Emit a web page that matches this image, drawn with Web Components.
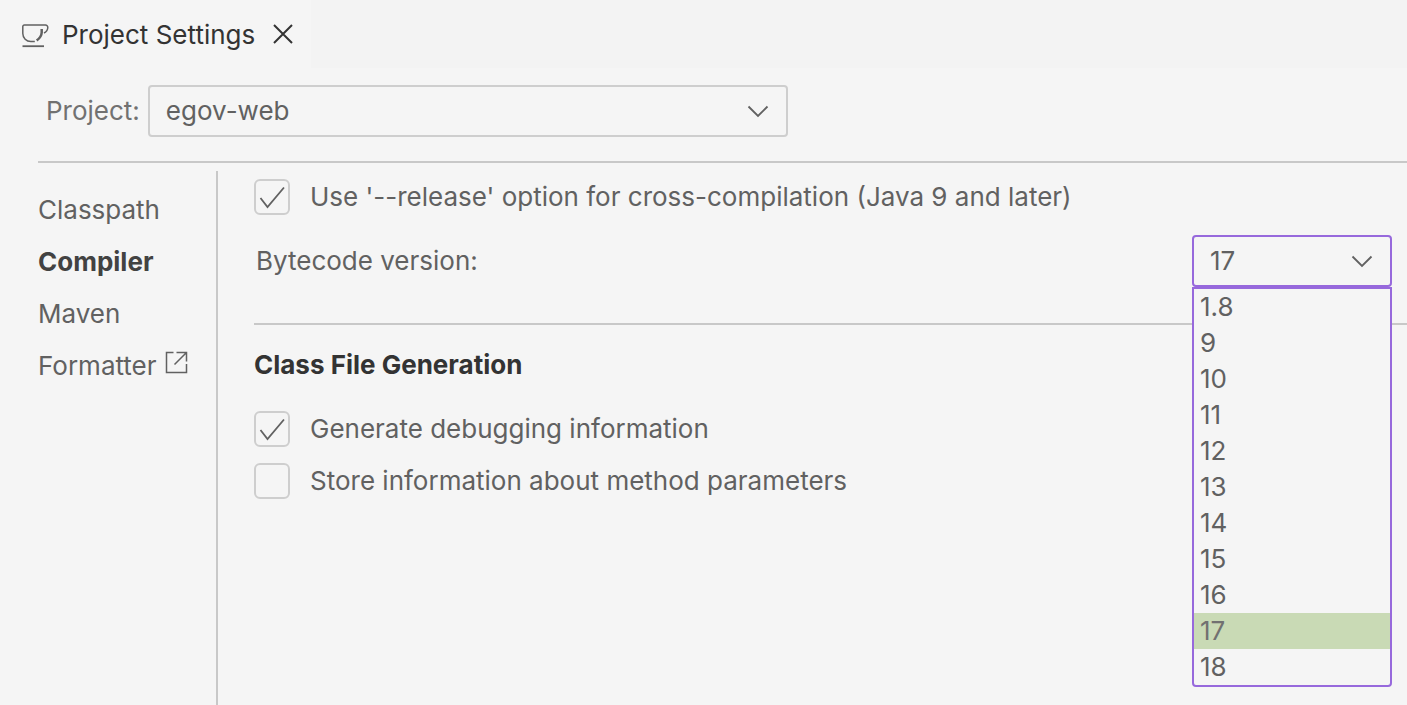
<!DOCTYPE html>
<html lang="en">
<head>
<meta charset="utf-8">
<title>Project Settings</title>
<style>
  html, body { height: 100%; }
  body {
    margin: 0;
    background: #f5f5f5;
    color: #616161;
    font: 26px/32px Inter, "Liberation Sans", sans-serif;
    --line: #c8c8c8;
    --border: #cecece;
    --focus: #9769dc;
    --selection: #c9dab5;
    --strong: #333333;
    overflow: hidden;
  }
</style>
</head>
<body>
<project-settings></project-settings>

<script>
class EditorTab extends HTMLElement {
  constructor() {
    super();
    this.attachShadow({ mode: "open" }).innerHTML = `
      <style>
        :host {
          display: flex;
          align-items: center;
          box-sizing: border-box;
          height: 68px;
          padding: 2px 16px 0 20px;
          background: #f5f5f5;
          color: var(--strong);
        }
        .cup { width: 30px; height: 28px; margin-right: 12px; }
        button {
          display: flex;
          margin: 0 0 0 16px;
          padding: 0;
          border: 0;
          background: none;
          color: inherit;
        }
      </style>
      <svg class="cup" viewBox="0 0 30 28" fill="none" stroke="#616161" stroke-width="1.5">
        <path d="M22 4H4.300a1.500 1.500 0 0 0-1.500 1.500v7a8 8 0 0 0 8 8h4"/>
        <path d="M22 4h3.500a2.300 2.300 0 0 1 2.300 2.300q0 4-3.800 5.700"/>
        <path d="M21.700 8v3.500q-.2 4.500-5 8" stroke-width="2.500"/>
        <path d="M2.500 25.200h21.500" stroke-width="1.800"/>
      </svg>
      <slot></slot>
      <button aria-label="Close">
        <svg width="24" height="24" viewBox="0 0 24 24" fill="none" stroke="currentColor" stroke-width="2">
          <path d="M3 2l18 18M21 2L3 20"/>
        </svg>
      </button>
    `;
  }
}

class SettingsNavItem extends HTMLElement {
  connectedCallback() {
    const active = this.hasAttribute("active");
    const external = this.hasAttribute("external");
    this.attachShadow({ mode: "open" }).innerHTML = `
      <style>
        :host { display: block; }
        a {
          display: flex;
          align-items: center;
          height: 52px;
          color: inherit;
          text-decoration: none;
        }
        a.active { color: #424242; font-weight: 700; }
        svg { margin: 0 0 6px 8px; }
      </style>
      <a href="#" class="${active ? "active" : ""}">
        <slot></slot>
        ${external ? `
        <svg width="24" height="24" viewBox="0 0 24 24" fill="none" stroke="#616161" stroke-width="1.5">
          <path d="M8.500 1.500H1.500v20h20V13M11.500 1.500h10v9M21 2L9.500 13.500"/>
        </svg>` : ""}
      </a>
    `;
  }
}

class CheckOption extends HTMLElement {
  connectedCallback() {
    this.attachShadow({ mode: "open" }).innerHTML = `
      <style>
        :host { display: block; }
        label { display: flex; align-items: center; gap: 20px; }
        .box { display: grid; flex: none; width: 36px; height: 36px; }
        .box > * { grid-area: 1 / 1; }
        input {
          appearance: none;
          box-sizing: border-box;
          width: 36px;
          height: 36px;
          margin: 0;
          border: 2px solid var(--border);
          border-radius: 6px;
        }
        svg { visibility: hidden; pointer-events: none; }
        input:checked + svg { visibility: visible; }
      </style>
      <label>
        <span class="box">
          <input type="checkbox" ${this.hasAttribute("checked") ? "checked" : ""}>
          <svg width="36" height="36" viewBox="0 0 36 36" fill="none" stroke="#616161" stroke-width="1.8">
            <path d="M6.500 19L13.500 28L30 8.500"/>
          </svg>
        </span>
        <span><slot></slot></span>
      </label>
    `;
  }
}

class SelectField extends HTMLElement {
  connectedCallback() {
    const options = this.getAttribute("options").split(",");
    const value = this.getAttribute("value");
    const open = this.hasAttribute("open");
    this.attachShadow({ mode: "open" }).innerHTML = `
      <style>
        :host { display: flex; align-items: center; }
        .field {
          display: grid;
          align-items: center;
          position: relative;
          width: var(--field-width, 200px);
        }
        .field > select, .field > svg { grid-area: 1 / 1; }
        select {
          appearance: none;
          box-sizing: border-box;
          width: 100%;
          height: 52px;
          margin: 0;
          padding: 0 16px;
          border: 2px solid var(--border);
          border-radius: 4px;
          outline: none;
          background: none;
          color: #616161;
          font: inherit;
        }
        svg { justify-self: end; margin-right: 18px; pointer-events: none; }
        :host([open]) select { border-color: var(--focus); }
        ul {
          box-sizing: border-box;
          position: absolute;
          top: 100%;
          left: 0;
          z-index: 1;
          width: 100%;
          margin: 0;
          padding: 0;
          border: 2px solid var(--focus);
          border-radius: 0 0 4px 4px;
          background: #f5f5f5;
          list-style: none;
        }
        li { padding: 0 6px; line-height: 36px; }
        li[aria-selected="true"] { background: var(--selection); color: #717171; }
      </style>
      <label for="select"><slot></slot></label>
      <div class="field">
        <select id="select">
          ${options.map((o) => `<option ${o === value ? "selected" : ""}>${o}</option>`).join("")}
        </select>
        <svg width="24" height="24" viewBox="0 0 24 24" fill="none" stroke="#616161" stroke-width="1.8">
          <path d="M2.500 7.500L12 17L21.500 7.500"/>
        </svg>
        ${open ? `
        <ul role="listbox">
          ${options.map((o) => `<li role="option" aria-selected="${o === value}">${o}</li>`).join("")}
        </ul>` : ""}
      </div>
    `;
  }
}

class ProjectSettings extends HTMLElement {
  constructor() {
    super();
    this.attachShadow({ mode: "open" }).innerHTML = `
      <style>
        :host { display: flex; flex-direction: column; height: 100%; }
        header { display: flex; background: #f3f3f3; }
        .project {
          --field-width: 640px;
          gap: 8px;
          padding: 17px 46px 24px;
          color: #717171;
        }
        hr {
          width: auto;
          margin: 0;
          border: 0;
          border-top: 2px solid var(--line);
        }
        .top { margin-left: 38px; }
        main { display: flex; flex: 1; margin-top: 8px; }
        nav {
          box-sizing: border-box;
          flex: none;
          width: 218px;
          padding: 13px 0 0 38px;
          border-right: 2px solid var(--line);
        }
        section { flex: 1; padding: 8px 0 0 36px; }
        .bytecode {
          justify-content: space-between;
          margin: 20px 15px 36px 2px;
        }
        h2 {
          margin: 24px 0 30px;
          color: var(--strong);
          font-size: inherit;
          font-weight: 700;
        }
        check-option + check-option { margin-top: 16px; }
      </style>
      <header><editor-tab>Project Settings</editor-tab></header>
      <select-field class="project" options="egov-web" value="egov-web">Project:</select-field>
      <hr class="top">
      <main>
        <nav>
          <settings-nav-item>Classpath</settings-nav-item>
          <settings-nav-item active>Compiler</settings-nav-item>
          <settings-nav-item>Maven</settings-nav-item>
          <settings-nav-item external>Formatter</settings-nav-item>
        </nav>
        <section>
          <check-option checked>Use '--release' option for cross-compilation (Java 9 and later)</check-option>
          <select-field class="bytecode" open options="1.8,9,10,11,12,13,14,15,16,17,18" value="17">Bytecode version:</select-field>
          <hr>
          <h2>Class File Generation</h2>
          <check-option checked>Generate debugging information</check-option>
          <check-option>Store information about method parameters</check-option>
        </section>
      </main>
    `;
  }
}

customElements.define("editor-tab", EditorTab);
customElements.define("settings-nav-item", SettingsNavItem);
customElements.define("check-option", CheckOption);
customElements.define("select-field", SelectField);
customElements.define("project-settings", ProjectSettings);
</script>
</body>
</html>
